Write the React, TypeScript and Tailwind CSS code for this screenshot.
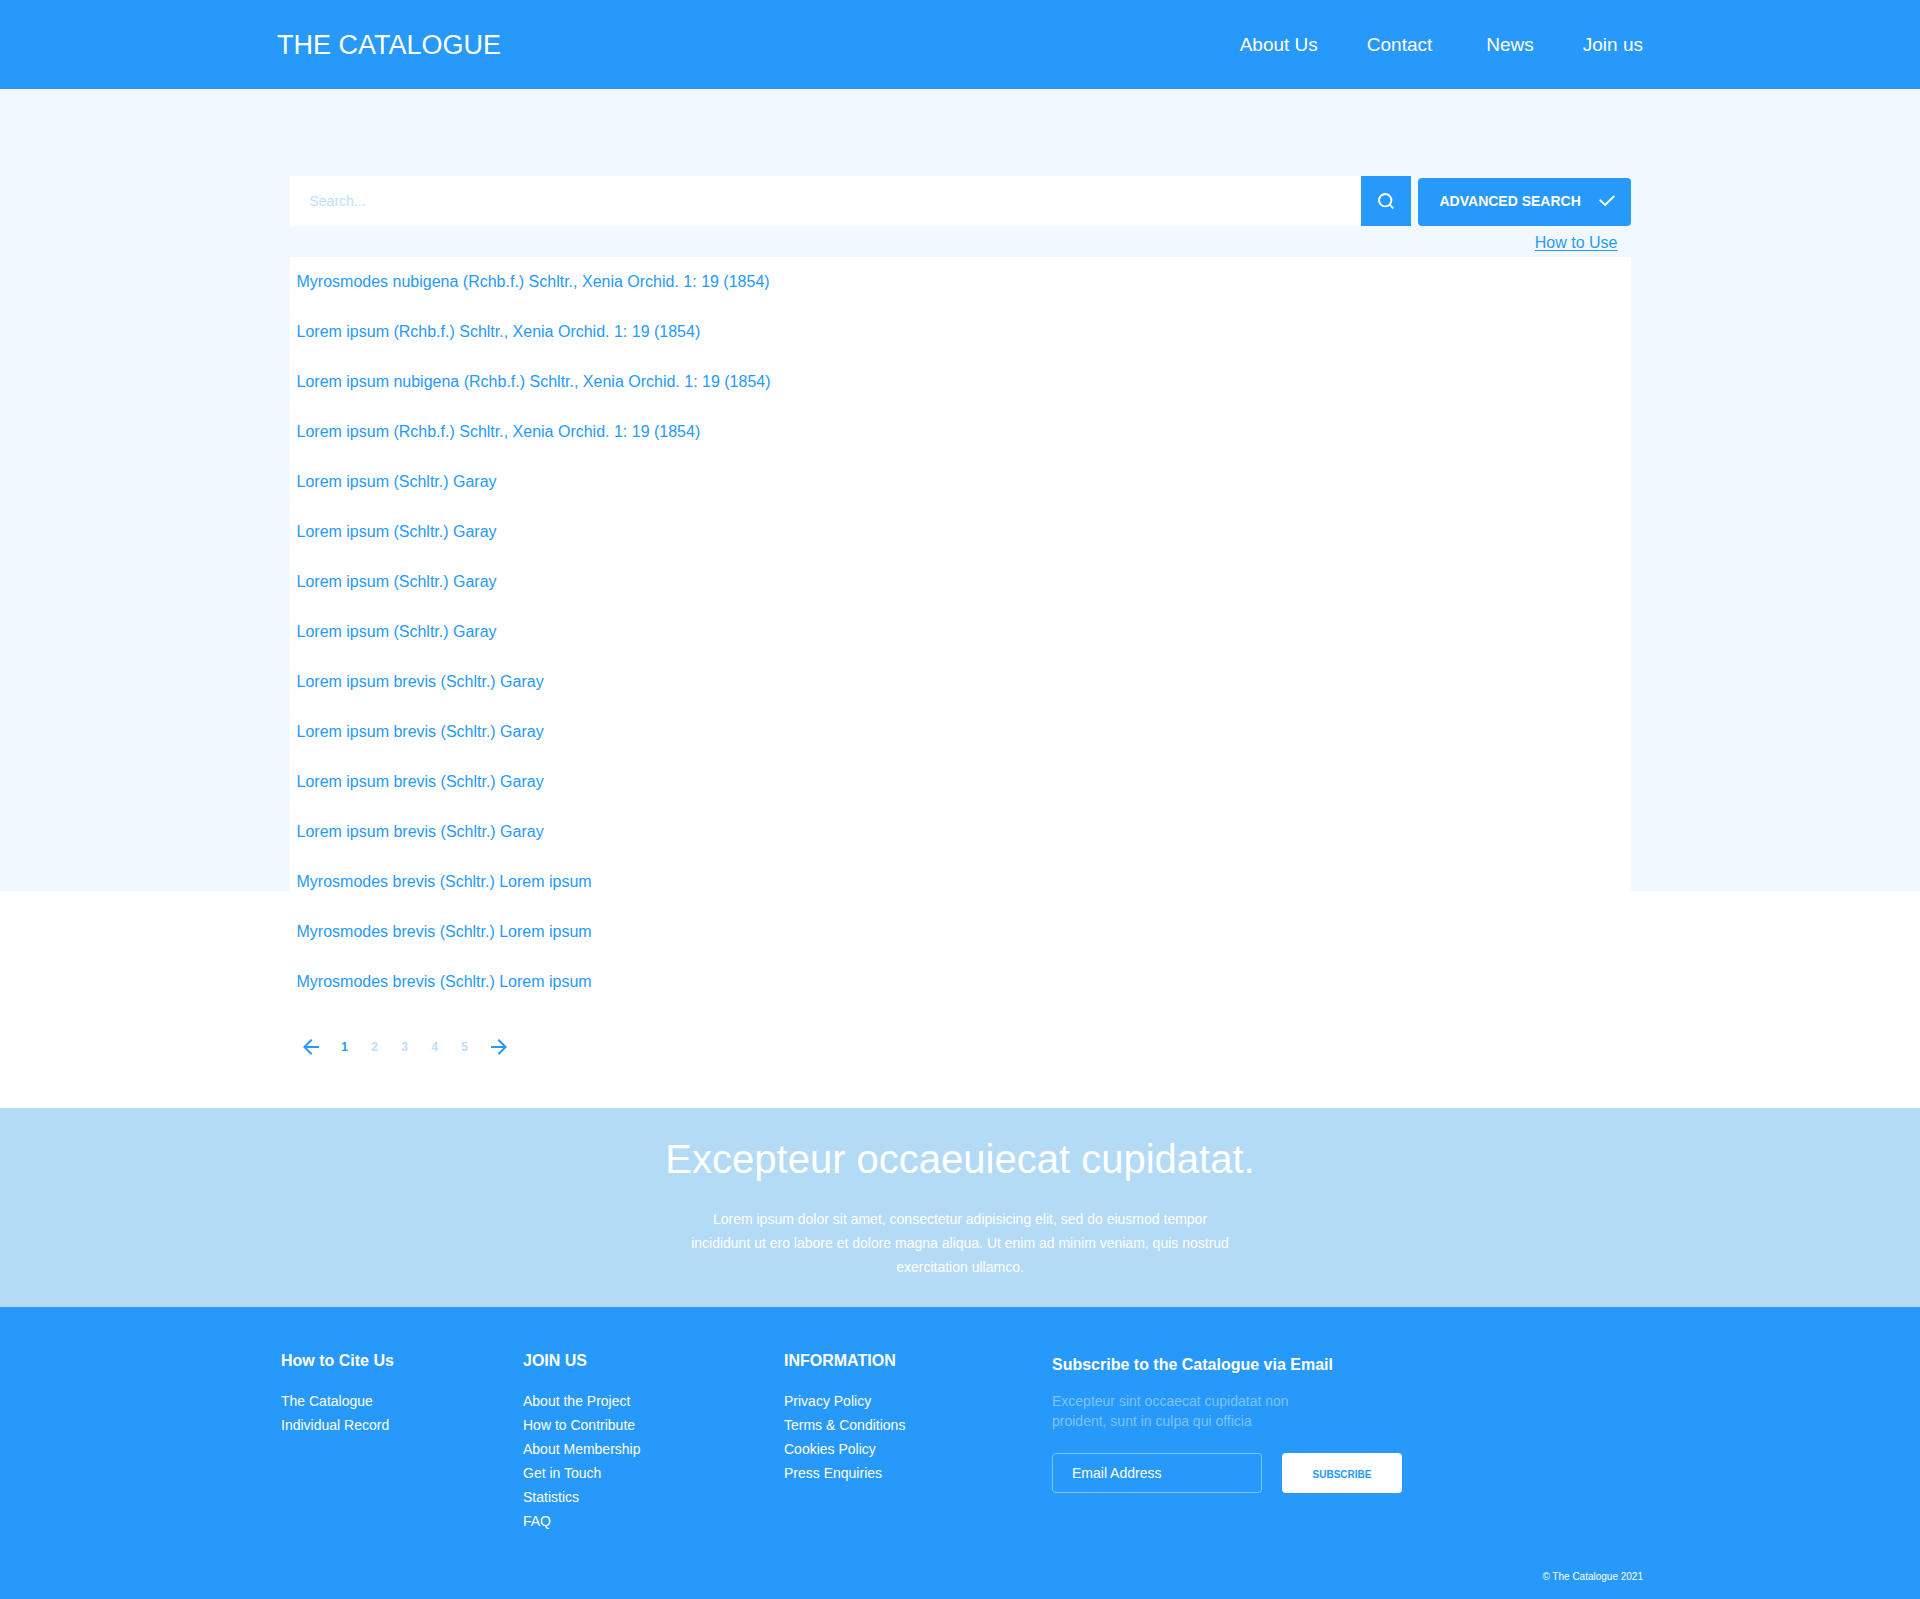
const navLinks = ["About Us", "Contact", "News", "Join us"];

const results = [
  "Myrosmodes nubigena (Rchb.f.) Schltr., Xenia Orchid. 1: 19 (1854)",
  "Lorem ipsum (Rchb.f.) Schltr., Xenia Orchid. 1: 19 (1854)",
  "Lorem ipsum nubigena (Rchb.f.) Schltr., Xenia Orchid. 1: 19 (1854)",
  "Lorem ipsum (Rchb.f.) Schltr., Xenia Orchid. 1: 19 (1854)",
  "Lorem ipsum (Schltr.) Garay",
  "Lorem ipsum (Schltr.) Garay",
  "Lorem ipsum (Schltr.) Garay",
  "Lorem ipsum (Schltr.) Garay",
  "Lorem ipsum brevis (Schltr.) Garay",
  "Lorem ipsum brevis (Schltr.) Garay",
  "Lorem ipsum brevis (Schltr.) Garay",
  "Lorem ipsum brevis (Schltr.) Garay",
  "Myrosmodes brevis (Schltr.) Lorem ipsum",
  "Myrosmodes brevis (Schltr.) Lorem ipsum",
  "Myrosmodes brevis (Schltr.) Lorem ipsum",
];

const footerColumns = [
  { title: "How to Cite Us", links: ["The Catalogue", "Individual Record"] },
  {
    title: "JOIN US",
    links: ["About the Project", "How to Contribute", "About Membership", "Get in Touch", "Statistics", "FAQ"],
  },
  {
    title: "INFORMATION",
    links: ["Privacy Policy", "Terms & Conditions", "Cookies Policy", "Press Enquiries"],
  },
];

function SearchIcon() {
  return (
    <svg width="16" height="16" viewBox="0 0 16 16" fill="none" stroke="currentColor" strokeWidth="1.9" aria-hidden="true">
      <circle cx="7.2" cy="7.2" r="6.2" />
      <path d="M11.4 11.4 15.4 15.4" />
    </svg>
  );
}

function CheckIcon() {
  return (
    <svg width="16" height="12" viewBox="0 0 16 12" fill="none" stroke="currentColor" strokeWidth="1.9" aria-hidden="true">
      <path d="M0.7 4.7 6.1 10 15.3 1" />
    </svg>
  );
}

function ArrowIcon({ flip = false }: { flip?: boolean }) {
  return (
    <svg width="16" height="16" viewBox="0 0 16 16" fill="none" stroke="currentColor" strokeWidth="2" aria-hidden="true">
      <path d={flip ? "M0 8H14.5M7.3 0.7 14.6 8 7.3 15.3" : "M16 8H1.5M8.7 0.7 1.4 8 8.7 15.3"} />
    </svg>
  );
}

function Header() {
  return (
    <header className="bg-[#2699fb] text-white">
      <div className="mx-auto flex h-[89px] max-w-[1366px] items-center justify-between">
        <h1 className="text-[27px] leading-8">
          <a href="#">THE CATALOGUE</a>
        </h1>
        <nav className="flex text-[19px] leading-7">
          {navLinks.map((label) => (
            <a key={label} href="#" className="ml-[49px] nth-[3]:ml-[54px]">
              {label}
            </a>
          ))}
        </nav>
      </div>
    </header>
  );
}

function Pagination() {
  return (
    <nav aria-label="Pages" className="flex items-center px-[13px] text-xs font-bold text-[#bce0fd]">
      <button type="button" aria-label="Previous page" className="mr-[11px] text-[#2699fb]">
        <ArrowIcon />
      </button>
      {[1, 2, 3, 4, 5].map((page) => (
        <button
          key={page}
          type="button"
          aria-current={page === 1 ? "page" : undefined}
          className="w-[30px] aria-[current=page]:text-[#2699fb]"
        >
          {page}
        </button>
      ))}
      <button type="button" aria-label="Next page" className="ml-[11px] text-[#2699fb]">
        <ArrowIcon flip />
      </button>
    </nav>
  );
}

function Catalogue() {
  return (
    <main className="bg-[linear-gradient(#f1f9ff_0_802px,#ffffff_802px)] pt-[87px]">
      <div className="mx-auto max-w-[1341px] text-[#2699fb]">
        <form className="flex items-end" onSubmit={(e) => e.preventDefault()}>
          <input
            type="search"
            aria-label="Search"
            placeholder="Search..."
            className="h-[50px] min-w-0 flex-1 bg-white px-5 text-sm outline-none placeholder:text-[#bce0fd]"
          />
          <button type="submit" aria-label="Submit search" className="flex size-[50px] items-center justify-center bg-[#2699fb] text-white">
            <SearchIcon />
          </button>
          <button
            type="button"
            className="ml-[7px] flex h-12 w-[213px] items-center justify-between rounded bg-[#2699fb] pr-4 pb-0.5 pl-[22px] text-sm font-bold text-white"
          >
            ADVANCED SEARCH
            <CheckIcon />
          </button>
        </form>
        <div className="flex h-[31px] items-end justify-end pr-[13px]">
          <a href="#" className="leading-7 underline underline-offset-2">
            How to Use
          </a>
        </div>
        <section aria-label="Results" className="bg-white pt-[13px] pb-[53px]">
          <ul className="flex flex-col gap-[26px] px-[7px] pb-[45px]">
            {results.map((name, i) => (
              <li key={i} className="leading-6">
                <a href="#">{name}</a>
              </li>
            ))}
          </ul>
          <Pagination />
        </section>
      </div>
    </main>
  );
}

function Banner() {
  return (
    <section className="bg-[#b3dbf6] pt-7 pb-7 text-center text-white">
      <h2 className="text-[40px] leading-[46px]">Excepteur occaeuiecat cupidatat.</h2>
      <p className="mx-auto mt-[25px] max-w-[544px] text-sm leading-6">
        Lorem ipsum dolor sit amet, consectetur adipisicing elit, sed do eiusmod tempor incididunt ut ero labore et
        dolore magna aliqua. Ut enim ad minim veniam, quis nostrud exercitation ullamco.
      </p>
    </section>
  );
}

function Footer() {
  return (
    <footer className="bg-[#2699fb] pt-[42px] pb-[18px] text-white">
      <div className="mx-auto max-w-[1366px]">
        <div className="grid grid-cols-[242fr_261fr_268fr_591fr] pl-1">
          {footerColumns.map(({ title, links }) => (
            <section key={title}>
              <h3 className="leading-6 font-bold">{title}</h3>
              <ul className="mt-4 text-sm leading-6">
                {links.map((label) => (
                  <li key={label}>
                    <a href="#">{label}</a>
                  </li>
                ))}
              </ul>
            </section>
          ))}
          <section className="pt-1">
            <h3 className="leading-6 font-bold">Subscribe to the Catalogue via Email</h3>
            <p className="mt-3.5 max-w-[260px] text-sm leading-5 text-[#7fc4fd]">
              Excepteur sint occaecat cupidatat non proident, sunt in culpa qui officia
            </p>
            <form className="mt-[22px] flex gap-5" onSubmit={(e) => e.preventDefault()}>
              <input
                type="email"
                aria-label="Email Address"
                placeholder="Email Address"
                className="h-10 w-[210px] rounded border border-[#7fc4fd] px-[19px] text-sm outline-none placeholder:text-white"
              />
              <button type="submit" className="h-10 w-[120px] rounded bg-white pt-0.5 text-[10px] font-bold text-[#2699fb]">
                SUBSCRIBE
              </button>
            </form>
          </section>
        </div>
        <p className="mt-9 text-right text-[10px] leading-4">© The Catalogue 2021</p>
      </div>
    </footer>
  );
}

export default function App() {
  return (
    <div className="bg-white font-['Liberation_Sans',Arial,sans-serif]">
      <Header />
      <Catalogue />
      <Banner />
      <Footer />
    </div>
  );
}
